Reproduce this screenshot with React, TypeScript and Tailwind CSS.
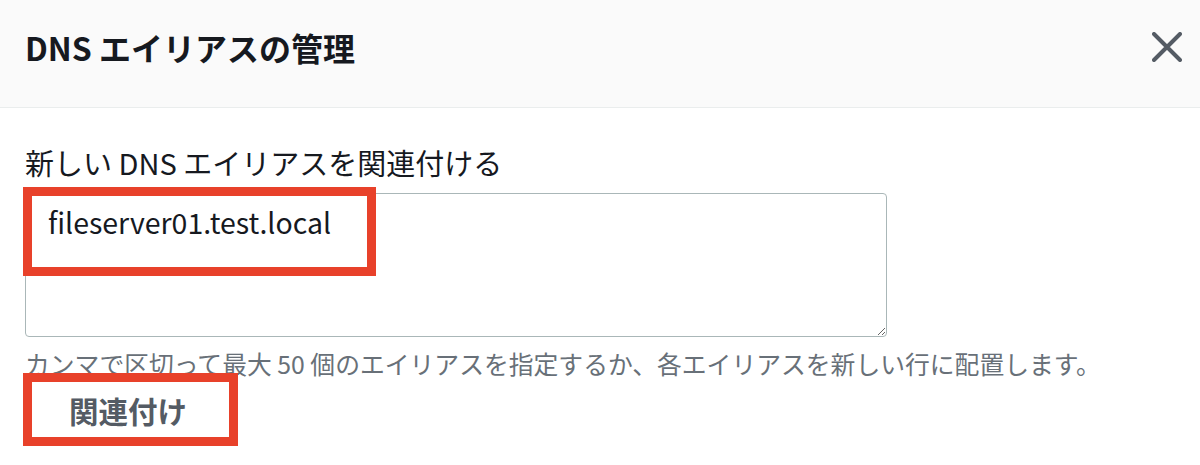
import React from 'react';

export default function App() {
  return (
    <div className="w-[1200px] h-[465px] bg-white overflow-hidden font-['Noto_Sans_CJK_JP',sans-serif] text-[#16191f]">
      {/* Header */}
      <div className="h-[108px] bg-[#fafafa] border-b border-[#eaeded] flex items-center justify-between pl-[25px] pr-[18px] pb-[14px]">
        <h2 className="text-[32px] font-bold leading-[40px]">DNS エイリアスの管理</h2>
        <svg width="30" height="30" viewBox="0 0 30 30" className="text-[#545b64]">
          <path d="M2 2 L28 28 M28 2 L2 28" stroke="currentColor" strokeWidth={4} strokeLinecap="round" fill="none" />
        </svg>
      </div>

      {/* Body */}
      <div className="pl-[25px] pt-[34px]">
        <label className="block text-[29px] leading-[40px]">新しい DNS エイリアスを関連付ける</label>

        <div className="relative mt-[11px] w-[862px] h-[144px]">
          <textarea
            defaultValue="fileserver01.test.local"
            className="w-full h-full border border-[#aab7b8] rounded-[4px] pl-[22px] pt-[7px] text-[28.5px] leading-[42px] text-[#16191f] outline-none"
          />
          <div className="absolute left-[-2px] top-[-6px] w-[353px] h-[89px] border-[9px] border-[#e8412a] pointer-events-none" />
        </div>

        <p className="mt-[10px] text-[24.8px] leading-[32px] text-[#687078]">
          カンマで区切って最大 50 個のエイリアスを指定するか、各エイリアスを新しい行に配置します。
        </p>

        <div className="relative mt-[4px] w-[203px] h-[54px]">
          <button className="w-full h-full flex items-center pl-[44px] text-[29.5px] font-bold text-[#545b64]">
            関連付け
          </button>
          <div className="absolute left-[-2px] top-[-10px] w-[215px] h-[73px] border-[9px] border-[#e8412a] pointer-events-none" />
        </div>
      </div>
    </div>
  );
}
